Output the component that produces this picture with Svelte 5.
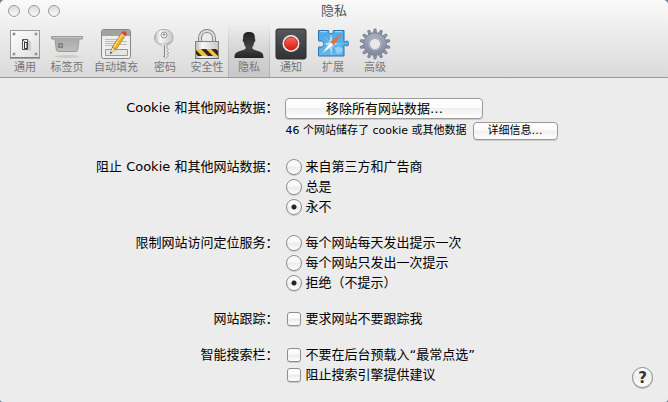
<script>
    const tabs = [
        { id: 'general', label: '通用' },
        { id: 'tabs', label: '标签页' },
        { id: 'autofill', label: '自动填充' },
        { id: 'passwords', label: '密码' },
        { id: 'security', label: '安全性' },
        { id: 'privacy', label: '隐私' },
        { id: 'notifications', label: '通知' },
        { id: 'extensions', label: '扩展' },
        { id: 'advanced', label: '高级' }
    ];

    const teeth = Array.from({ length: 14 }, (_, i) => (i * 360) / 14);

    const cookieOptions = [
        { value: 'third', label: '来自第三方和广告商' },
        { value: 'always', label: '总是' },
        { value: 'never', label: '永不' }
    ];

    const locationOptions = [
        { value: 'daily', label: '每个网站每天发出提示一次' },
        { value: 'once', label: '每个网站只发出一次提示' },
        { value: 'deny', label: '拒绝（不提示）' }
    ];

    let active = $state('privacy');
    let cookies = $state('never');
    let location = $state('deny');
    let doNotTrack = $state(false);
    let noPreload = $state(false);
    let noSuggestions = $state(false);
</script>

{#snippet icon(id)}
    <svg class="icon" width="32" height="32" viewBox="0 0 32 32" aria-hidden="true">
        {#if id === 'general'}
            <rect x="1.5" y="2.5" width="29" height="27" fill="url(#plate)" stroke="#9a9a9a" />
            <path d="M1 30h30" stroke="#666" />
            {#each [[5, 6], [27, 6], [5, 26], [27, 26]] as [x, y]}
                <circle cx={x} cy={y} r="1.7" fill="#bbb" />
                <path d="M{x - 1} {y + 1}l2-2" stroke="#555" stroke-width=".8" />
            {/each}
            <path d="M18 22l4 1v-9l-3-3z" fill="#ccc" />
            <path d="M13.500 11.500h5v10h-5z" fill="#f5f5f5" stroke="#555" />
            <path d="M15.500 14.500h2.500v6h-2.500z" fill="#fff" stroke="#333" />
            <path d="M14 12l2 2" stroke="#666" />
        {:else if id === 'tabs'}
            <ellipse cx="16" cy="28.500" rx="12" ry="1.500" fill="#bbb" opacity=".6" />
            <path d="M.5 8.500h31v2.500h-1.500c-1.500 0-2 .7-2.200 2l-1 8c-.2 1.800-1 2.500-2.500 2.500h-16.600c-1.500 0-2.300-.7-2.500-2.500l-1-8c-.2-1.300-.7-2-2.200-2h-1.500z" fill="url(#tab)" stroke="#999" />
            <path d="M1 9.500h30" stroke="#c4c4c4" />
            <path d="M7.500 15.500h4v4h-4zM8 16l3 3m0-3l-3 3" fill="none" stroke="#777" stroke-width=".9" />
        {:else if id === 'autofill'}
            <rect x="1.500" y="1.500" width="29" height="29" rx="2" fill="#eee" stroke="#888" />
            <path d="M2 3q0-1 1-1h26q1 0 1 1v5h-28z" fill="#a2a2a2" />
            <path d="M5 11.500h15M5 13.500h12M5 15.500h14M5 17.500h10M21 13.500h6M20 16.500h7" stroke="#bbb" />
            <path d="M5.500 21.500h22v6h-22z" fill="#e4e4e4" stroke="#999" />
            <path d="M10 26l2-7 10-15 4 3-10 15z" fill="#7a5a18" />
            <path d="M12.500 19l9-13.500 3.500 2.500-9 13.500z" fill="#f4ac22" />
            <path d="M13 19l9-13.500 1.200.8-9 13.500z" fill="#ffdc68" />
            <path d="M10 26l2.300-6.500 3.500 2.500z" fill="#f1d9ab" />
            <path d="M10 26l.7-2.300 1.400 1z" fill="#222" />
            <path d="M21.500 5.500l1.500-2c1-1.200 4.500.8 3.700 2.500l-1.400 2.300z" fill="#df4131" />
            <path d="M20.800 6.500l.8-1.200 3.800 2.600-.8 1.200z" fill="#c7c7c7" />
        {:else if id === 'passwords'}
            <path d="M12.500 17c-4.500-1-6.500-3.500-7-7 .5-5.500 4-8.500 9.500-8.500s9 3 9 8c0 3.500-2 6.500-6 7.500v3l1.500 1.500-1.500 1.500 2 2-2 1.500 1.500 1.500-3 2.500-2.500-2.500v-9.500z" fill="url(#metal)" stroke="#aaa" />
            <path d="M6.500 12c3 4.500 13.500 4.500 16.500 0-1 2.500-3 4-5 4.500l-5-.2c-3-.8-5-2-6.500-4.300z" fill="#999" opacity=".55" />
            <circle cx="15" cy="7" r="3" fill="#eee" stroke="#999" />
            <circle cx="15" cy="6.500" r="1.200" fill="#999" />
            <path d="M15.500 17v12" stroke="#888" />
            <path d="M14 17v11" stroke="#f5f5f5" />
        {:else if id === 'security'}
            <path d="M9 14v-4c0-9.500 14-9.500 14 0v4" fill="none" stroke="#858585" stroke-width="4" />
            <path d="M9 14v-4c0-9.500 14-9.500 14 0v4" fill="none" stroke="#ddd" stroke-width="2" />
            <rect x="4.500" y="13.500" width="23" height="17" fill="url(#metal)" stroke="#858585" />
            <path d="M5 21h22v7h-22z" fill="#f5c13a" />
            <path d="M5 22l6 6h-4l-2-2zM10 21h5l7 7h-5zM20 21h5l2 2v5z" fill="#292929" />
            <path d="M4 30.500h24" stroke="#666" />
        {:else if id === 'privacy'}
            <path d="M1.500 30c0-4 1-5.500 4-6.500l6-2c1.200-.5 1.500-1.800.8-3-1-1.300-1.300-2.800-1.500-4.300-1.200-.2-1.500-3.200-.6-3.700-.5-4.500 1.500-6.500 5.800-6.500s6.300 2 5.800 6.500c.9.500.6 3.500-.6 3.700-.2 1.500-.5 3-1.500 4.300-.7 1.200-.4 2.500.8 3l6 2c3 1 4 2.500 4 6.500z" fill="url(#person)" />
        {:else if id === 'notifications'}
            <rect x="1" y="1" width="30" height="30" rx="2" fill="url(#dark)" stroke="#292a2c" />
            <circle cx="16" cy="15.500" r="8.500" fill="#eee" />
            <circle cx="16" cy="15.500" r="6.500" fill="url(#red)" stroke="#b72920" />
        {:else if id === 'extensions'}
            <path d="M1.500 2.500h10c.7 0 .7.700.2 1.200-1 2.300 5.600 2.300 4.600 0-.5-.5-.5-1.200.2-1.200h10.500v10.500c0 1 1 1 1.500.5 1.500-1 3.500 0 3.500 2s-2 3-3.500 2c-.5-.5-1.500-.5-1.500.5v10h-25.500v-8.500c0-1 1-1 1.500-.5 5 1 5-7 0-6-.5.500-1.500.5-1.500-.5z" fill="url(#blue)" stroke="#2773b4" />
            <path d="M3 3.700h7M18 3.700h7" stroke="#b2defa" />
            <path d="M14.500 7v20M5 16h20M8 9l13 14M8 23l13-14" stroke="#a9dcfa" stroke-width=".5" />
            <path d="M14 6l1.500 7.500 5 2.500-5 2-1.500 8-1.500-8-5-2 5-2.500z" fill="#ccecff" opacity=".75" />
            <path d="M18 20l4-2 4 3-2 4-4 1z" fill="#a4d7f5" opacity=".8" />
            <path d="M25 5.500l-8.500 12-3.500-3.500z" fill="#ee6a34" />
            <path d="M5 25.500l11.500-8-3.500-3.500z" fill="#fafafa" stroke="#8aa9c2" stroke-width=".5" />
            <circle cx="14.700" cy="16" r="1" fill="#edf6fb" />
        {:else if id === 'advanced'}
            {#each teeth as angle}
                <path d="M14.200 6l.9-5h1.800l.9 5z" transform="rotate({angle} 16 16)" fill="#929bad" stroke="#6f7787" stroke-width=".8" />
            {/each}
            <circle cx="16" cy="16" r="8.300" fill="none" stroke="#6f7787" stroke-width="6.200" />
            <circle cx="16" cy="16" r="8.300" fill="none" stroke="url(#steel)" stroke-width="5" />
            <circle cx="16" cy="16" r="6" fill="none" stroke="#c7ccd6" stroke-width=".8" />
        {/if}
    </svg>
{/snippet}

<svg class="defs" width="0" height="0" aria-hidden="true">
    <defs>
        <linearGradient id="plate" x2="1" y2="1"><stop stop-color="#fff" /><stop offset="1" stop-color="#dedede" /></linearGradient>
        <linearGradient id="tab" x2="0" y2="1"><stop stop-color="#a6a6a6" /><stop offset="1" stop-color="#bdbdbd" /></linearGradient>
        <linearGradient id="metal"><stop stop-color="#bbb" /><stop offset=".3" stop-color="#f7f7f7" /><stop offset="1" stop-color="#c7c7c7" /></linearGradient>
        <linearGradient id="person" x2="0" y2="1"><stop stop-color="#222" /><stop offset=".6" stop-color="#444" /><stop offset="1" stop-color="#252525" /></linearGradient>
        <linearGradient id="dark" x2="0" y2="1"><stop stop-color="#56585b" /><stop offset="1" stop-color="#303235" /></linearGradient>
        <linearGradient id="red" x2="0" y2="1"><stop stop-color="#f66a60" /><stop offset="1" stop-color="#dc1912" /></linearGradient>
        <linearGradient id="blue" x2="0" y2="1"><stop stop-color="#4ba9e9" /><stop offset="1" stop-color="#64b6e8" /></linearGradient>
        <linearGradient id="steel" x2="0" y2="1"><stop stop-color="#a2aab9" /><stop offset="1" stop-color="#858fa2" /></linearGradient>
    </defs>
</svg>

<div class="window">
    <header>
        <div class="titlebar">
            <div class="lights">
                <button aria-label="关闭"></button>
                <button aria-label="最小化"></button>
                <button aria-label="缩放"></button>
            </div>
            <h1>隐私</h1>
        </div>
        <nav>
            {#each tabs as tab (tab.id)}
                <button class="tab" class:active={active === tab.id} onclick={() => (active = tab.id)}>
                    {@render icon(tab.id)}
                    <span>{tab.label}</span>
                </button>
            {/each}
        </nav>
    </header>

    <main>
        <form>
            <div class="label">Cookie 和其他网站数据：</div>
            <div class="data">
                <button type="button" class="push">移除所有网站数据…</button>
                <div class="details">
                    <span>46 个网站储存了 cookie 或其他数据</span>
                    <button type="button" class="push small">详细信息…</button>
                </div>
            </div>

            <div class="label" id="cookies-label">阻止 Cookie 和其他网站数据：</div>
            <div role="radiogroup" aria-labelledby="cookies-label">
                {#each cookieOptions as option (option.value)}
                    <label><input type="radio" name="cookies" value={option.value} bind:group={cookies} />{option.label}</label>
                {/each}
            </div>

            <div class="label" id="location-label">限制网站访问定位服务：</div>
            <div role="radiogroup" aria-labelledby="location-label">
                {#each locationOptions as option (option.value)}
                    <label><input type="radio" name="location" value={option.value} bind:group={location} />{option.label}</label>
                {/each}
            </div>

            <div class="label">网站跟踪：</div>
            <div>
                <label><input type="checkbox" bind:checked={doNotTrack} />要求网站不要跟踪我</label>
            </div>

            <div class="label">智能搜索栏：</div>
            <div>
                <label><input type="checkbox" bind:checked={noPreload} />不要在后台预载入“最常点选”</label>
                <label><input type="checkbox" bind:checked={noSuggestions} />阻止搜索引擎提供建议</label>
            </div>
        </form>
        <button class="help" aria-label="帮助">?</button>
    </main>
</div>

<style>
    :global(body) {
        background: #6d8096;
    }

    .defs {
        position: absolute;
    }

    .window {
        display: flex;
        flex-direction: column;
        min-height: 100vh;
        background: #ececec;
        border-radius: 5px 5px 3px 3px;
        overflow: hidden;
        font-family: "DejaVu Sans", "Noto Sans CJK SC", sans-serif;
        font-size: 13px;
        line-height: 20px;
        color: #000;
    }

    button {
        margin: 0;
        padding: 0;
        font-family: inherit;
        color: inherit;
    }

    header {
        background: linear-gradient(#f9f9f9, #f0f0f0 30%, #dadada);
        border-bottom: 1px solid #999;
    }

    .titlebar {
        display: grid;
        grid-template-columns: 1fr auto 1fr;
        align-items: center;
        height: 22px;
    }

    h1 {
        margin: 0;
        font-size: 13px;
        font-weight: normal;
        color: #555;
    }

    .lights {
        display: flex;
        gap: 8px;
        padding-left: 8px;
    }

    .lights button {
        width: 12px;
        height: 12px;
        border: 1px solid #999;
        border-radius: 50%;
        background: linear-gradient(#ddd, #f8f8f8);
        box-shadow: 0 1px 0 #fff;
    }

    nav {
        display: flex;
        padding-left: 4px;
    }

    .tab {
        display: flex;
        flex-direction: column;
        align-items: center;
        box-sizing: border-box;
        min-width: 42px;
        height: 55px;
        padding: 6px 6px 0;
        border: 0;
        background: none;
        font-size: 11px;
        line-height: 16px;
        color: #777;
        white-space: nowrap;
    }

    .tab:not(:nth-child(3)) {
        width: 42px;
        padding: 6px 0 0;
    }

    .tab .icon {
        flex: none;
    }

    .tab.active {
        background:
            linear-gradient(#b0b0b000, #b0b0b0) left / 1px 100% no-repeat,
            linear-gradient(#b0b0b000, #b0b0b0) right / 1px 100% no-repeat,
            linear-gradient(#c8c8c800, #c8c8c8);
    }

    main {
        display: flex;
        flex: 1;
        align-items: flex-start;
        padding: 20px 15px 14px 96px;
    }

    form {
        display: grid;
        grid-template-columns: auto 1fr;
        flex: 1;
        gap: 16px 7px;
    }

    .label {
        text-align: right;
    }

    .data {
        display: flex;
        flex-direction: column;
        align-items: flex-start;
        gap: 2px;
    }

    .details {
        display: flex;
        align-items: center;
        gap: 6px;
        height: 20px;
        font-size: 11px;
    }

    .push {
        width: 198px;
        height: 21px;
        border: 1px solid #999;
        border-radius: 4px;
        background: linear-gradient(#fff, #fcfcfc 45%, #efefef 50%, #fff);
        box-shadow: 0 1px 0 #ccc;
        font-size: 13px;
        line-height: 18px;
    }

    .push.small {
        width: 85px;
        height: 18px;
        font-size: 11px;
        line-height: 14px;
    }

    label {
        display: flex;
        align-items: center;
        gap: 3px;
        height: 20px;
    }

    input {
        appearance: none;
        box-sizing: border-box;
        width: 14px;
        height: 14px;
        margin: 0 1px 0 2px;
        border: 1px solid #8d8d8d;
        border-radius: 3px;
        background: linear-gradient(#fff, #f8f8f8 45%, #eaeaea 50%, #fff);
        box-shadow: 0 1px 0 #ccc;
    }

    input[type="radio"] {
        width: 16px;
        height: 16px;
        margin: 0 0 0 1px;
        border-radius: 50%;
    }

    input[type="radio"]:checked {
        background:
            radial-gradient(circle, #222 2px, #2220 3px),
            linear-gradient(#fff, #f8f8f8 45%, #eaeaea 50%, #fff);
    }

    input[type="checkbox"]:checked {
        background: #555;
    }

    .help {
        align-self: flex-end;
        width: 21px;
        height: 21px;
        border: 1px solid #888;
        border-radius: 50%;
        background: linear-gradient(#fff, #eee 50%, #fff);
        box-shadow: 0 1px 0 #bbb;
        font-size: 15px;
        font-weight: bold;
        line-height: 18px;
        color: #333;
    }
</style>
